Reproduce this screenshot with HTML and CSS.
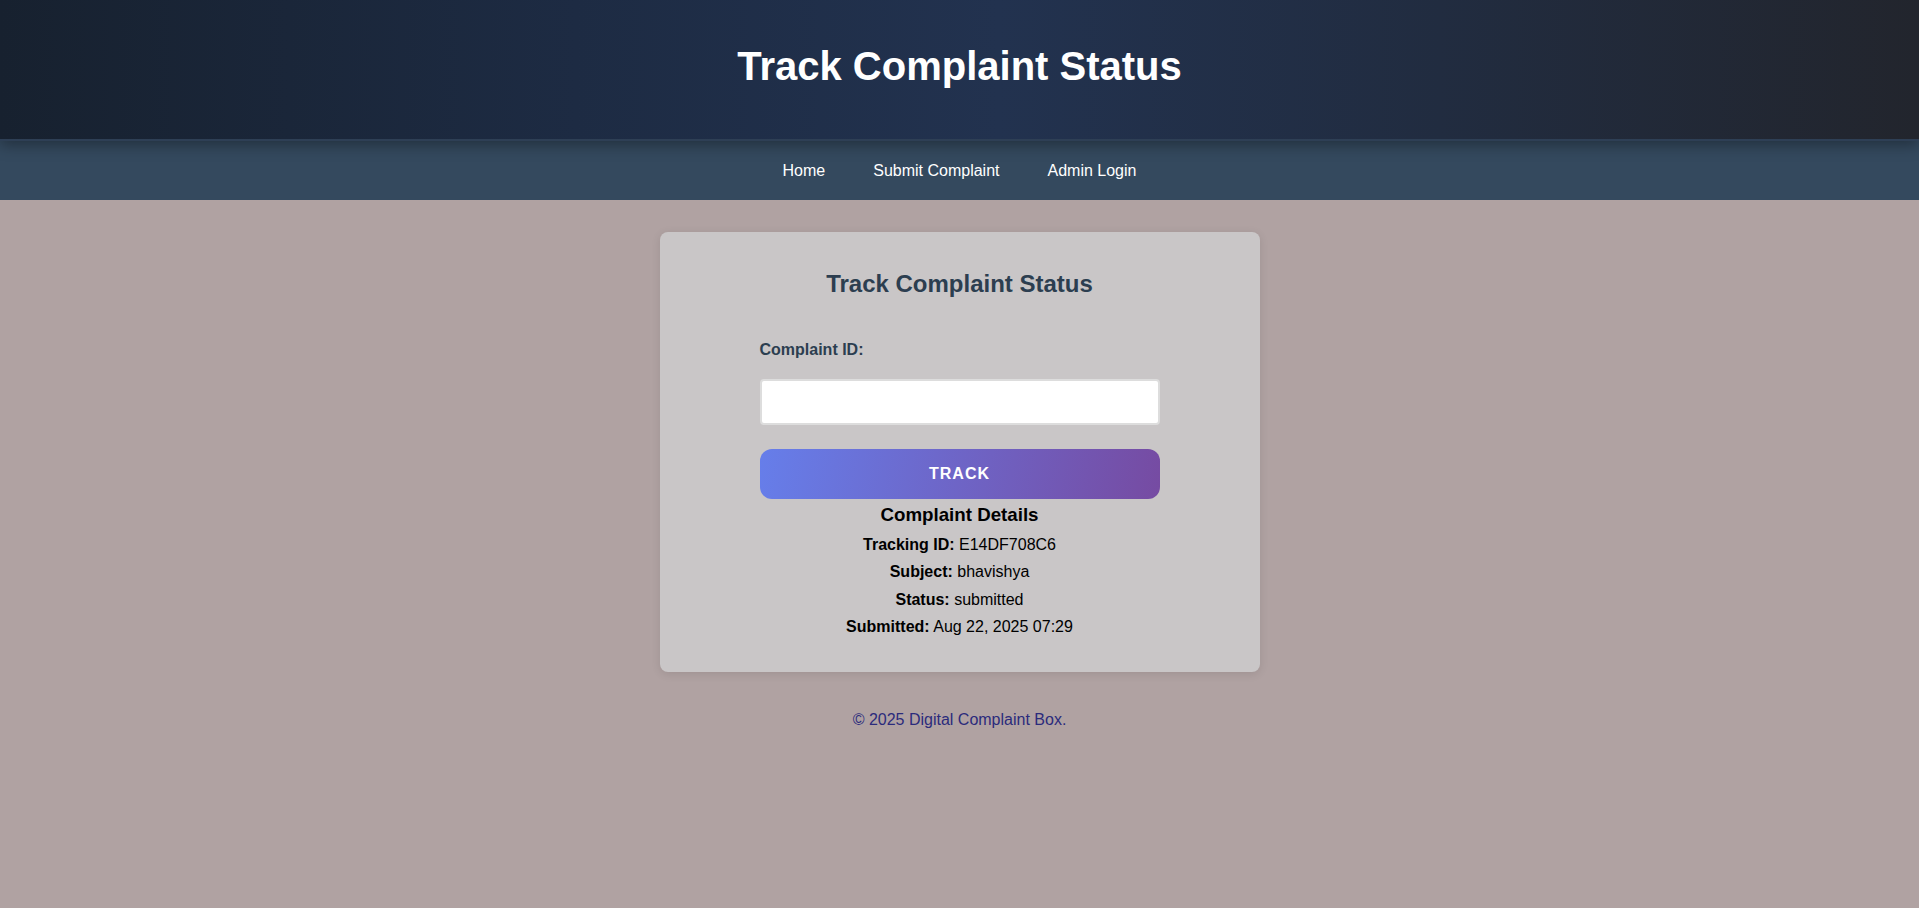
FILE: index.html
```html
<!DOCTYPE html>
<html lang="en">
<head>
<meta charset="utf-8">
<title>Track Complaint Status</title>
<link rel="stylesheet" href="styles.css">
</head>
<body>
<header class="site-header">
  <h1 class="site-title">Track Complaint Status</h1>
</header>
<nav class="site-nav">
  <a href="#" class="nav-link">Home</a>
  <a href="#" class="nav-link">Submit Complaint</a>
  <a href="#" class="nav-link">Admin Login</a>
</nav>
<main class="main">
  <section class="card">
    <h2 class="card-title">Track Complaint Status</h2>
    <form class="track-form">
      <label class="field-label" for="cid">Complaint ID:</label>
      <input class="field-input" id="cid" type="text">
      <button class="track-btn" type="button">Track</button>
    </form>
    <div class="details">
      <h3 class="details-title">Complaint Details</h3>
      <p class="detail"><strong>Tracking ID:</strong> E14DF708C6</p>
      <p class="detail"><strong>Subject:</strong> bhavishya</p>
      <p class="detail"><strong>Status:</strong> submitted</p>
      <p class="detail"><strong>Submitted:</strong> Aug 22, 2025 07:29</p>
    </div>
  </section>
</main>
<footer class="site-footer">
  <p class="footer-text">&copy; 2025 Digital Complaint Box.</p>
</footer>
</body>
</html>
```

FILE: styles.css
```css
* { box-sizing: border-box; }

html, body {
  margin: 0;
  padding: 0;
}

body {
  font-family: Arial, "Liberation Sans", Helvetica, sans-serif;
  background: #b0a2a2;
  min-height: 908px;
}

.site-header {
  height: 141px;
  background: linear-gradient(90deg, #17212f 0%, #1d2b43 30%, #22324f 52%, #212c40 75%, #22252d 100%);
  border-bottom: 2px solid #2e3f55;
  display: flex;
  align-items: center;
  justify-content: center;
  position: relative;
  z-index: 2;
  box-shadow: 0 4px 14px rgba(0, 0, 0, 0.35);
}

.site-title {
  margin: 0 0 8px;
  color: #ffffff;
  font-size: 40px;
  font-weight: bold;
  line-height: 46px;
}

.site-nav {
  height: 59px;
  background: #34495e;
  display: flex;
  justify-content: center;
  align-items: center;
  padding-top: 1px;
}

.nav-link {
  color: #ffffff;
  text-decoration: none;
  font-size: 16px;
  padding: 8px 24px;
}

.main {
  display: flex;
  justify-content: center;
  padding-top: 32px;
}

.card {
  width: 600px;
  background: #c9c6c7;
  border-radius: 8px;
  box-shadow: 0 2px 10px rgba(0, 0, 0, 0.1);
  padding: 38px 0 36px;
}

.card-title {
  margin: 0;
  text-align: center;
  color: #2c3e50;
  font-size: 24px;
  line-height: 28px;
}

.track-form {
  width: 400px;
  margin: 43px auto 0;
  display: flex;
  flex-direction: column;
}

.field-label {
  color: #2c3e50;
  font-weight: bold;
  font-size: 16px;
  line-height: 18px;
}

.field-input {
  margin-top: 20px;
  height: 46px;
  border: 2px solid #dddddd;
  border-radius: 4px;
  background: #ffffff;
  font-size: 16px;
  padding: 0 12px;
}

.track-btn {
  margin-top: 24px;
  height: 50px;
  border: none;
  border-radius: 12px;
  background: linear-gradient(100deg, #667eea 0%, #764ba2 100%);
  color: #ffffff;
  font-family: Arial, "Liberation Sans", Helvetica, sans-serif;
  font-size: 16px;
  font-weight: bold;
  text-transform: uppercase;
  letter-spacing: 1px;
}

.details {
  text-align: center;
  color: #000000;
  margin-top: 5px;
}

.details-title {
  margin: 0 0 10px;
  font-size: 18.72px;
  line-height: 22px;
}

.detail {
  margin: 0;
  font-size: 16px;
  line-height: 18px;
}

.detail + .detail {
  margin-top: 9.3px;
}

.site-footer {
  text-align: center;
  padding-top: 39px;
}

.footer-text {
  margin: 0;
  color: #2b2b7c;
  font-size: 16px;
  line-height: 18px;
}
```
